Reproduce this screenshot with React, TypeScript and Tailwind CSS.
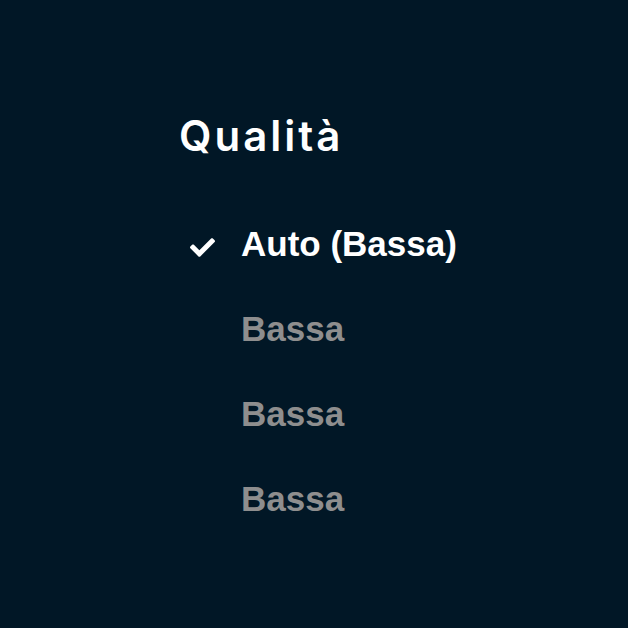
import React from 'react';
import { FaCheck } from 'react-icons/fa';

const OPTIONS = [
  { label: 'Auto (Bassa)', selected: true },
  { label: 'Bassa', selected: false },
  { label: 'Bassa', selected: false },
  { label: 'Bassa', selected: false },
];

export default function App() {
  return (
    <div className="w-[628px] h-[628px] bg-[#011726] overflow-hidden">
      <div className="pl-[179px] pt-[108px]">
        <h1 className="text-white text-[42px] leading-[56px] font-semibold tracking-[3px] font-['Inter',sans-serif]">
          Qualità
        </h1>
        <ul className="mt-[56px] flex flex-col gap-[37px] font-['Liberation_Sans',Arial,sans-serif] font-bold">
          {OPTIONS.map((opt, i) => (
            <li key={i} className="flex items-center h-[48px]">
              <span className="w-[62px] flex pl-[11px] pt-[6px]">
                {opt.selected && <FaCheck className="text-white w-[25px] h-[25px]" />}
              </span>
              <span className={`text-[35px] leading-[48px] ${opt.selected ? 'text-white' : 'text-[#8e8e8e]'}`}>
                {opt.label}
              </span>
            </li>
          ))}
        </ul>
      </div>
    </div>
  );
}
